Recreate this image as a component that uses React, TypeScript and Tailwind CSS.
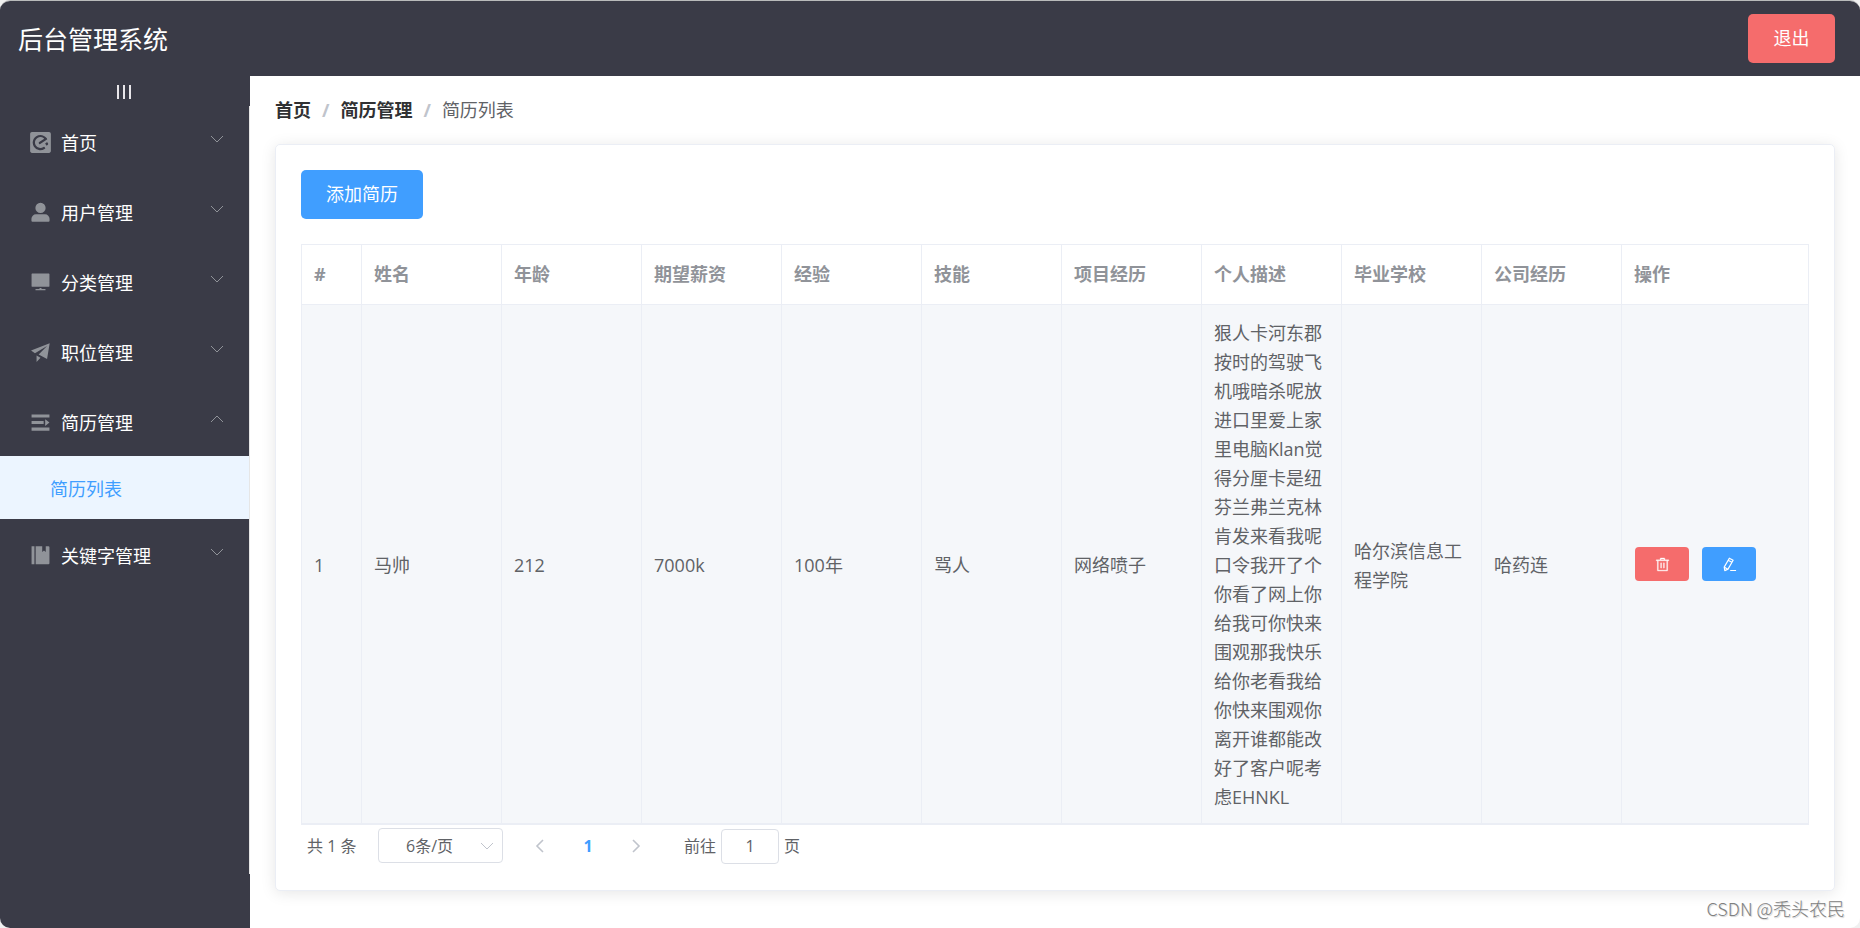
import React, { useState } from "react";

type MenuItem = { label: string; icon: React.ReactNode; children?: string[] };

const Icon = ({ children, className = "" }: { children: React.ReactNode; className?: string }) => (
  <svg viewBox="0 0 1024 1024" fill="currentColor" aria-hidden="true" className={`shrink-0 ${className}`}>
    {children}
  </svg>
);

const menu: MenuItem[] = [
  {
    label: "首页",
    icon: (
      <g transform="translate(512 512) scale(1.13) translate(-512 -512)">
        <path
          fillRule="evenodd"
          d="M144 64h736c44 0 80 36 80 80v736c0 44-36 80-80 80H144c-44 0-80-36-80-80V144c0-44 36-80 80-80zm182.500 173.600c-152.900 100-196.500 304-97.400 457a330.700 330.700 0 0 0 457 96.600c9.200-5.900 17.600-11.800 25.100-18.600a18.200 18.200 0 0 0 4.200-24.300l-15.100-23.500a47.600 47.600 0 0 0-65.500-14.300A234.600 234.600 0 0 1 310.600 641.600C240 533.200 271.100 388 379.500 316.500a234.300 234.300 0 0 1 276.300 15.100c1.700.8 2.600 2.600 3.400 4.300 5.900 8.400 3.300 19.300-5.100 25.200L456.800 489.600a47.600 47.600 0 0 0-14.300 65.500l16 24.400c5.900 8.300 16.800 10.800 25.200 5l308.200-200a19.600 19.600 0 0 0 6.800-23.400v-.9c-5-9.200-10.100-17.600-15.100-26.900-100-151.200-304.100-194.900-457-95.700zM786.900 504.700l-62.200 40.300c-8.400 5.900-10.900 16.800-5 25.200l40.300 62.100c5.900 8.500 16.800 11 25.200 5.100l31.100-20.100a55.400 55.400 0 0 0 16-76.500l-20.200-31a19.500 19.500 0 0 0-25.200-5.100z"
        />
      </g>
    ),
  },
  {
    label: "用户管理",
    icon: (
      <path d="M512 40a250 250 0 1 1 0 500 250 250 0 0 1 0-500zM290 600h444a220 220 0 0 1 220 220v90a50 50 0 0 1-50 50H120a50 50 0 0 1-50-50v-90a220 220 0 0 1 220-220z" />
    ),
  },
  {
    label: "分类管理",
    icon: <path d="M100 70h824q24 0 24 24v600q0 24-24 24H100q-24 0-24-24V94q0-24 24-24zM464 780h96v50h180q20 0 20 32t-20 32H284q-20 0-20-32t20-32h180z" />,
  },
  {
    label: "职位管理",
    icon: <path d="M50 420 960 60 832 832 422 612 832 192 242 545zM320 970V657l192 111z" />,
  },
  {
    label: "简历管理",
    icon: <path d="M76 120h872v150H76zM76 440h590v150H76zM740 350l208 165-208 165zM76 760h872v150H76z" />,
    children: ["简历列表"],
  },
  {
    label: "关键字管理",
    icon: <path d="M76 60h140v884H76zM276 60h320v280l86-76 86 76V60h130q50 0 50 50v784q0 50-50 50H276z" />,
  },
];

const columns = ["#", "姓名", "年龄", "期望薪资", "经验", "技能", "项目经历", "个人描述", "毕业学校", "公司经历", "操作"];

const rows = [
  [
    "1",
    "马帅",
    "212",
    "7000k",
    "100年",
    "骂人",
    "网络喷子",
    "狠人卡河东郡按时的驾驶飞机哦暗杀呢放进口里爱上家里电脑Klan觉得分厘卡是纽芬兰弗兰克林肯发来看我呢口令我开了个你看了网上你给我可你快来围观那我快乐给你老看我给你快来围观你离开谁都能改好了客户呢考虑EHNKL",
    "哈尔滨信息工程学院",
    "哈药连",
  ],
];

const Chevron = ({ dir, className = "" }: { dir: "up" | "down" | "left" | "right"; className?: string }) => {
  const d = {
    down: "M2 5l6 6 6-6",
    up: "M2 11l6-6 6 6",
    left: "M11 2L5 8l6 6",
    right: "M5 2l6 6-6 6",
  }[dir];
  return (
    <svg viewBox="0 0 16 16" fill="none" stroke="currentColor" aria-hidden="true" className={`shrink-0 ${className}`}>
      <path d={d} />
    </svg>
  );
};

function Sidebar() {
  const [open, setOpen] = useState("简历管理");
  return (
    <aside className="flex w-[250px] shrink-0 flex-col bg-[#3a3b47] text-white">
      <button type="button" aria-label="折叠菜单" className="flex h-[30px] items-center justify-center gap-1 pt-0.5 pr-0.5">
        <span className="h-3.5 w-0.5 bg-[#e8e6ea]" />
        <span className="h-3.5 w-0.5 bg-[#e8e6ea]" />
        <span className="h-3.5 w-0.5 bg-[#e8e6ea]" />
      </button>
      <nav className="mb-[54px] grow border-r border-[#e6e6e6]">
        <ul>
          {menu.map((m) => {
            const active = open === m.label;
            return (
              <li key={m.label}>
                <button
                  type="button"
                  aria-expanded={active}
                  onClick={() => setOpen(active ? "" : m.label)}
                  className="flex h-[70px] w-full items-center pt-[3px] pr-6 pl-[30px] text-left"
                >
                  <Icon className="size-[21px] text-[#909399]">{m.icon}</Icon>
                  <span className="ml-2.5 grow pt-px">{m.label}</span>
                  <Chevron dir={active ? "up" : "down"} className="mb-2 size-4 text-[#909399]" />
                </button>
                {active &&
                  m.children?.map((c) => (
                    <a key={c} href="#list" className="flex h-[63px] items-center bg-[#ecf5ff] pt-1 pl-[50px] text-[#409eff]">
                      {c}
                    </a>
                  ))}
              </li>
            );
          })}
        </ul>
      </nav>
    </aside>
  );
}

function Breadcrumb() {
  return (
    <nav aria-label="面包屑" className="flex h-[68px] items-center gap-[11px] text-[#606266]">
      <a href="#home" className="font-bold text-[#303133]">首页</a>
      <span className="font-bold text-[#c0c4cc]">/</span>
      <a href="#resume" className="font-bold text-[#303133]">简历管理</a>
      <span className="font-bold text-[#c0c4cc]">/</span>
      <span>简历列表</span>
    </nav>
  );
}

function ResumeTable() {
  return (
    <table className="mt-[25px] w-full table-fixed border-collapse border border-[#ebeef5] text-left">
      <colgroup>
        {columns.map((c, i) => (
          <col key={c} className={i === 0 ? "w-[60px]" : i === columns.length - 1 ? "w-auto" : "w-[140px]"} />
        ))}
      </colgroup>
      <thead>
        <tr className="h-[60px] text-[#909399]">
          {columns.map((c) => (
            <th key={c} className="border border-[#ebeef5] px-3 font-bold">{c}</th>
          ))}
        </tr>
      </thead>
      <tbody>
        {rows.map((r) => (
          <tr key={r[0]} className="border-b-2 border-[#ebeef5] bg-[#f5f7fa]">
            {r.map((v, i) => (
              <td key={columns[i]} className="border-x border-[#ebeef5] px-3 pt-3.5 pb-[11px] break-all">{v}</td>
            ))}
            <td className="border-x border-[#ebeef5] px-[13px]">
              <div className="flex gap-[13px]">
                <button type="button" aria-label="删除" className="flex h-[34px] w-[54px] items-center justify-center rounded bg-[#f56c6c] text-white">
                  <Icon className="size-[15px]">
                    <path d="M160 256H96a32 32 0 0 1 0-64h256V95.900a32 32 0 0 1 32-32h256a32 32 0 0 1 32 32V192h256a32 32 0 1 1 0 64h-64v672a32 32 0 0 1-32 32H192a32 32 0 0 1-32-32V256zm448-64v-64H416v64h192zM224 896h576V256H224v640zm192-128a32 32 0 0 1-32-32V416a32 32 0 0 1 64 0v320a32 32 0 0 1-32 32zm192 0a32 32 0 0 1-32-32V416a32 32 0 0 1 64 0v320a32 32 0 0 1-32 32z" stroke="currentColor" strokeWidth="20" />
                  </Icon>
                </button>
                <button type="button" aria-label="编辑" className="flex h-[34px] w-[54px] items-center justify-center rounded bg-[#409eff] text-white">
                  <Icon className="size-[15px]">
                    <path d="M500 80 760 220 410 830 190 930 150 690zM420 220 670 360M170 700 400 830M560 920H960" fill="none" stroke="currentColor" strokeWidth="80" strokeLinejoin="round" />
                  </Icon>
                </button>
              </div>
            </td>
          </tr>
        ))}
      </tbody>
    </table>
  );
}

function Pagination() {
  return (
    <div className="flex items-center pt-[3px] pl-1.5 text-base leading-[35px] text-[#606266]">
      <span className="w-[71px]">共 1 条</span>
      <div className="relative">
        <select
          aria-label="每页条数"
          defaultValue="6"
          className="h-[35px] w-[125px] appearance-none rounded border border-[#dcdfe6] bg-white pr-[26px] pl-[4px] text-center [text-align-last:center]"
        >
          <option value="6">6条/页</option>
          <option value="10">10条/页</option>
        </select>
        <Chevron dir="down" className="pointer-events-none absolute top-2.5 right-2 size-4 text-[#c0c4cc]" />
      </div>
      <button type="button" disabled aria-label="上一页" className="ml-[13px] flex w-12 justify-center text-[#c0c4cc]">
        <Chevron dir="left" className="size-4 stroke-[1.6]" />
      </button>
      <button type="button" aria-current="page" className="w-12 font-bold text-[#409eff]">1</button>
      <button type="button" disabled aria-label="下一页" className="flex w-12 justify-center text-[#c0c4cc]">
        <Chevron dir="right" className="size-4 stroke-[1.6]" />
      </button>
      <label className="ml-6 flex items-center gap-[5px]">
        前往
        <input type="text" defaultValue="1" className="h-[35px] w-[58px] rounded border border-[#dcdfe6] text-center" />
        页
      </label>
    </div>
  );
}

export default function App() {
  return (
    <div className="relative bg-[#f0f0f0] font-['Open_Sans','Noto_Sans_CJK_SC',sans-serif] text-[18px] leading-[29px] text-[#606266]">
      <div className="flex min-h-screen flex-col overflow-hidden rounded-[10px] border-t border-[#b9bbbb] bg-white">
        <header className="flex h-[75px] shrink-0 items-center justify-between bg-[#3a3b47] pr-[25px] pl-[18px] text-white">
          <h1 className="pt-0.5 text-[25px]">后台管理系统</h1>
          <button type="button" className="h-[49px] w-[87px] rounded-[5px] bg-[#f56c6c]">退出</button>
        </header>
        <div className="flex grow">
          <Sidebar />
          <main className="min-w-0 grow px-[25px] pb-[37px]">
            <Breadcrumb />
            <section className="rounded-[5px] border border-[#ebeef5] bg-white px-[25px] pt-[25px] pb-[26px] shadow-[0_2px_15px_0_rgba(0,0,0,0.1)]">
              <button type="button" className="h-[49px] w-[122px] rounded-[5px] bg-[#409eff] text-white">添加简历</button>
              <ResumeTable />
              <Pagination />
            </section>
          </main>
        </div>
      </div>
      <p className="absolute right-[15px] bottom-[5px] font-['Noto_Sans_CJK_SC',sans-serif] font-light text-[#808080] [text-shadow:1px_1px_1px_#d0d0d0]">
        CSDN @秃头农民
      </p>
    </div>
  );
}
